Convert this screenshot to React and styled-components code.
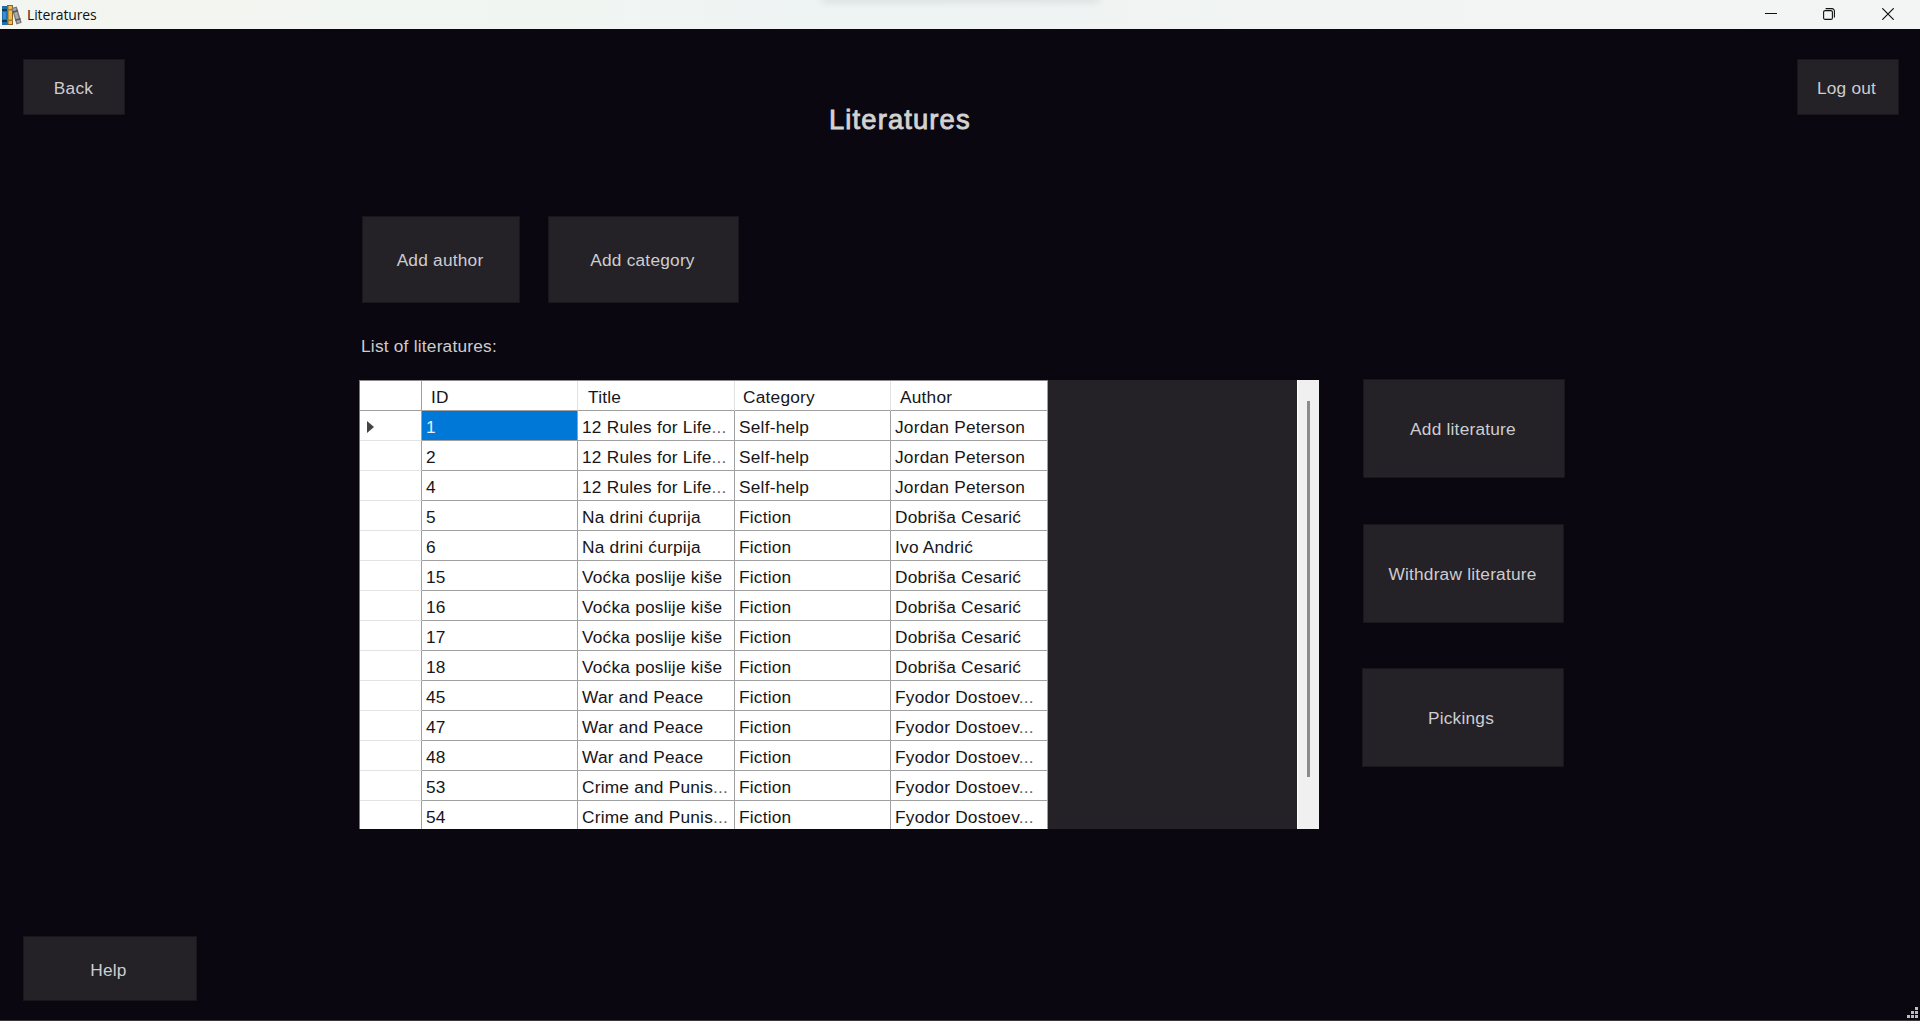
import React from "react";
import styled, { createGlobalStyle } from "styled-components";

const GlobalStyle = createGlobalStyle`
  * { box-sizing: border-box; }
  body {
    margin: 0;
    background: #0a0710;
    overflow: hidden;
  }
`;

const Window = styled.div`
  display: flex;
  flex-direction: column;
  height: 1021px;
  width: 1920px;
  background: #0a0710;
  border-bottom: 1px solid #3b3b3d;
  font-family: "Liberation Sans", Arial, sans-serif;
  font-size: 17.3px;
  letter-spacing: 0.22px;
  color: #cdcdcf;
`;

const TitleBar = styled.header`
  display: flex;
  align-items: center;
  flex: none;
  height: 29px;
  padding-left: 2px;
  overflow: hidden;
  background: linear-gradient(90deg, #f3f5f0 0%, #f1f5f2 30%, #eef3f4 45%, #f1f4f2 65%, #f2f5f3 100%);
`;

const TitleText = styled.span`
  width: 795px;
  margin-left: 5px;
  padding-top: 1px;
  font-family: "Open Sans", "Noto Sans", sans-serif;
  font-size: 14px;
  line-height: 20px;
  letter-spacing: -0.13px;
  color: #111;
`;

const SnapShadow = styled.div`
  align-self: flex-start;
  width: 276px;
  height: 4px;
  margin-top: -4px;
  border-radius: 4px;
  box-shadow: 0 0 9px 1px rgba(60, 70, 70, 0.17);
`;

const WindowControls = styled.div`
  display: flex;
  margin-left: auto;
`;

const Control = styled.div`
  display: flex;
  align-items: center;
  justify-content: center;
  width: ${(p) => p.$width}px;
  height: 29px;
  padding-bottom: 1px;
`;

const Content = styled.main`
  display: flex;
  flex-direction: column;
  flex: 1;
  padding: 30px 0 0;
`;

const Button = styled.button`
  display: flex;
  align-items: center;
  justify-content: center;
  flex: none;
  width: ${(p) => p.$w}px;
  height: ${(p) => p.$h}px;
  padding: ${(p) => p.$pad || "1px 0 0 0"};
  border: 1px solid #19161c;
  background: #242127;
  color: inherit;
  font: inherit;
  letter-spacing: inherit;
`;

const TopRow = styled.div`
  display: flex;
  height: 157px;
  padding: 0 21px 0 23px;
`;

const Heading = styled.h1`
  flex: 1;
  margin: 46px 0 0 704px;
  font-size: 27.400px;
  line-height: 30px;
  font-weight: 400;
  letter-spacing: 1.120px;
  -webkit-text-stroke: 0.9px #d2d2d2;
  color: #d2d2d2;
`;

const Actions = styled.div`
  display: flex;
  gap: 28px;
  padding-left: 362px;
`;

const ListLabel = styled.div`
  height: 20px;
  margin: 33px 0 24px 361px;
  line-height: 20px;
`;

const Workspace = styled.section`
  display: flex;
  align-items: flex-start;
  padding-left: 359px;
`;

const Grid = styled.div`
  display: flex;
  width: 960px;
  height: 449px;
  overflow: hidden;
  background: #242127;
`;

const Rows = styled.div`
  width: 689px;
  flex: none;
  border-top: 1px solid #8b898c;
  border-left: 1px solid #77757a;
`;

const Row = styled.div`
  display: grid;
  grid-template-columns: 62px 156px 157px 156px 157px;
  grid-template-rows: 30px;
  height: 30px;
  color: #17151a;
`;

const HeaderCell = styled.div`
  padding: 1px 0 0 ${(p) => p.$indent || 9}px;
  border-right: 1px solid ${(p) => (p.$strong ? "#a0a0a0" : "#e2e2e2")};
  border-bottom: 1px solid #a0a0a0;
  background: #fff;
  line-height: 30px;
  white-space: nowrap;
`;

const RowHeader = styled.div`
  display: flex;
  align-items: center;
  padding: 2px 0 0 7px;
  border-right: 1px solid #a0a0a0;
  border-bottom: 1px solid #e3e3e3;
  background: #fff;
`;

const Cell = styled.div`
  padding: 1px 4px 0 4px;
  border-right: 1px solid #a0a0a0;
  border-bottom: 1px solid #a0a0a0;
  background: ${(p) => (p.$selected ? "#0078d7" : "#fff")};
  color: ${(p) => (p.$selected ? "#e6f1fb" : "inherit")};
  line-height: 30px;
  white-space: nowrap;
  overflow: hidden;
`;

const Dots = styled.span`
  color: #66646a;
`;

const ScrollTrack = styled.div`
  display: flex;
  justify-content: center;
  width: 22px;
  margin-left: auto;
  padding: 21px 0 0 0;
  border-left: 1px solid #fff;
  background: #f0f0f0;
`;

const ScrollThumb = styled.div`
  width: 3px;
  height: 376px;
  background: #8b8b8b;
`;

const SideActions = styled.aside`
  display: flex;
  flex-direction: column;
  margin: -1px 0 0 43px;
`;

const SideSlot = styled.div`
  height: ${(p) => p.$h}px;
  padding-left: ${(p) => p.$indent}px;
`;

const Footer = styled.footer`
  display: flex;
  align-items: flex-end;
  justify-content: space-between;
  margin-top: auto;
  padding: 0 2px 2px 23px;
`;

const HelpSlot = styled.div`
  padding-bottom: 17px;
`;

const rows = [
  ["1", "12 Rules for Life...", "Self-help", "Jordan Peterson"],
  ["2", "12 Rules for Life...", "Self-help", "Jordan Peterson"],
  ["4", "12 Rules for Life...", "Self-help", "Jordan Peterson"],
  ["5", "Na drini ćuprija", "Fiction", "Dobriša Cesarić"],
  ["6", "Na drini ćurpija", "Fiction", "Ivo Andrić"],
  ["15", "Voćka poslije kiše", "Fiction", "Dobriša Cesarić"],
  ["16", "Voćka poslije kiše", "Fiction", "Dobriša Cesarić"],
  ["17", "Voćka poslije kiše", "Fiction", "Dobriša Cesarić"],
  ["18", "Voćka poslije kiše", "Fiction", "Dobriša Cesarić"],
  ["45", "War and Peace", "Fiction", "Fyodor Dostoev..."],
  ["47", "War and Peace", "Fiction", "Fyodor Dostoev..."],
  ["48", "War and Peace", "Fiction", "Fyodor Dostoev..."],
  ["53", "Crime and Punis...", "Fiction", "Fyodor Dostoev..."],
  ["54", "Crime and Punis...", "Fiction", "Fyodor Dostoev..."],
];

const CellText = ({ value }) =>
  value.endsWith("...") ? (
    <>
      {value.slice(0, -3)}
      <Dots>...</Dots>
    </>
  ) : (
    value
  );

const BooksIcon = () => (
  <svg width="20" height="20" viewBox="0 0 20 20">
    <rect x="0" y="1" width="6" height="19" fill="#1d6fae" />
    <rect x="0" y="4" width="6" height="2" fill="#16384f" />
    <rect x="0" y="15" width="6" height="2" fill="#16384f" />
    <rect x="1" y="7" width="3" height="7" fill="#2f93d6" />
    <rect x="5" y="0" width="6" height="20" fill="#8a6420" />
    <rect x="6.5" y="1" width="3.5" height="18" fill="#f0bd55" />
    <rect x="5" y="4" width="6" height="1.5" fill="#a97a2a" />
    <rect x="5" y="14.500" width="6" height="1.5" fill="#a97a2a" />
    <g transform="rotate(-17 14.500 11)">
      <rect x="12" y="2" width="5.500" height="17" fill="#777" />
      <rect x="13.300" y="3" width="2.800" height="15" fill="#ababab" />
      <rect x="12" y="5.500" width="5.500" height="1.500" fill="#555" />
      <rect x="12" y="14" width="5.500" height="1.500" fill="#555" />
    </g>
  </svg>
);

const MinimizeIcon = () => (
  <svg width="12" height="12" viewBox="0 0 12 12">
    <path d="M0 5.500H12" stroke="#111" />
  </svg>
);

const RestoreIcon = () => (
  <svg width="12" height="12" viewBox="0 0 12 12" fill="none" stroke="#111" strokeWidth="1.100">
    <rect x="0.600" y="2.600" width="8.800" height="8.800" rx="1.500" />
    <path d="M2.600 0.600H9A2.400 2.400 0 0 1 11.400 3V9.400" />
  </svg>
);

const CloseIcon = () => (
  <svg width="12" height="12" viewBox="0 0 12 12">
    <path d="M0.300 0.300L11.700 11.700M11.700 0.300L0.300 11.700" stroke="#111" strokeWidth="1.200" />
  </svg>
);

const RowArrow = () => (
  <svg width="7" height="12" viewBox="0 0 7 12">
    <path d="M0 0L7 6L0 12Z" fill="#444" />
  </svg>
);

const ResizeGrip = () => (
  <svg width="11" height="11" viewBox="0 0 11 11" fill="#bdbdbb">
    <rect x="8" y="0" width="3" height="3" />
    <rect x="4" y="4" width="3" height="3" />
    <rect x="8" y="4" width="3" height="3" />
    <rect x="0" y="8" width="3" height="3" />
    <rect x="4" y="8" width="3" height="3" />
    <rect x="8" y="8" width="3" height="3" />
  </svg>
);

export default function App() {
  return (
    <Window>
      <GlobalStyle />
      <TitleBar>
        <BooksIcon />
        <TitleText>Literatures</TitleText>
        <SnapShadow />
        <WindowControls>
          <Control $width={58}><MinimizeIcon /></Control>
          <Control $width={58}><RestoreIcon /></Control>
          <Control $width={60}><CloseIcon /></Control>
          <Control $width={2} />
        </WindowControls>
      </TitleBar>
      <Content>
        <TopRow>
          <Button $w={102} $h={56} $pad="3px 1px 0 0">Back</Button>
          <Heading>Literatures</Heading>
          <Button $w={102} $h={56} $pad="3px 3px 0 0">Log out</Button>
        </TopRow>
        <Actions>
          <Button $w={158} $h={87} $pad="2px 2px 0 0">Add author</Button>
          <Button $w={191} $h={87} $pad="2px 2px 0 0">Add category</Button>
        </Actions>
        <ListLabel>List of literatures:</ListLabel>
        <Workspace>
          <Grid>
            <Rows>
              <Row>
                <HeaderCell $strong />
                <HeaderCell>ID</HeaderCell>
                <HeaderCell $indent={10}>Title</HeaderCell>
                <HeaderCell $indent={8}>Category</HeaderCell>
                <HeaderCell $strong>Author</HeaderCell>
              </Row>
              {rows.map((row, r) => (
                <Row key={row[0]}>
                  <RowHeader>{r === 0 && <RowArrow />}</RowHeader>
                  {row.map((value, c) => (
                    <Cell key={c} $selected={r === 0 && c === 0}>
                      <CellText value={value} />
                    </Cell>
                  ))}
                </Row>
              ))}
            </Rows>
            <ScrollTrack>
              <ScrollThumb />
            </ScrollTrack>
          </Grid>
          <SideActions>
            <SideSlot $h={145} $indent={1}>
              <Button $w={202} $h={99} $pad="2px 2px 0 0">Add literature</Button>
            </SideSlot>
            <SideSlot $h={144} $indent={1}>
              <Button $w={201} $h={99} $pad="2px 2px 0 0">Withdraw literature</Button>
            </SideSlot>
            <SideSlot $h={99} $indent={0}>
              <Button $w={202} $h={99} $pad="2px 4px 0 0">Pickings</Button>
            </SideSlot>
          </SideActions>
        </Workspace>
        <Footer>
          <HelpSlot>
            <Button $w={174} $h={65} $pad="4px 3px 0 0">Help</Button>
          </HelpSlot>
          <ResizeGrip />
        </Footer>
      </Content>
    </Window>
  );
}
